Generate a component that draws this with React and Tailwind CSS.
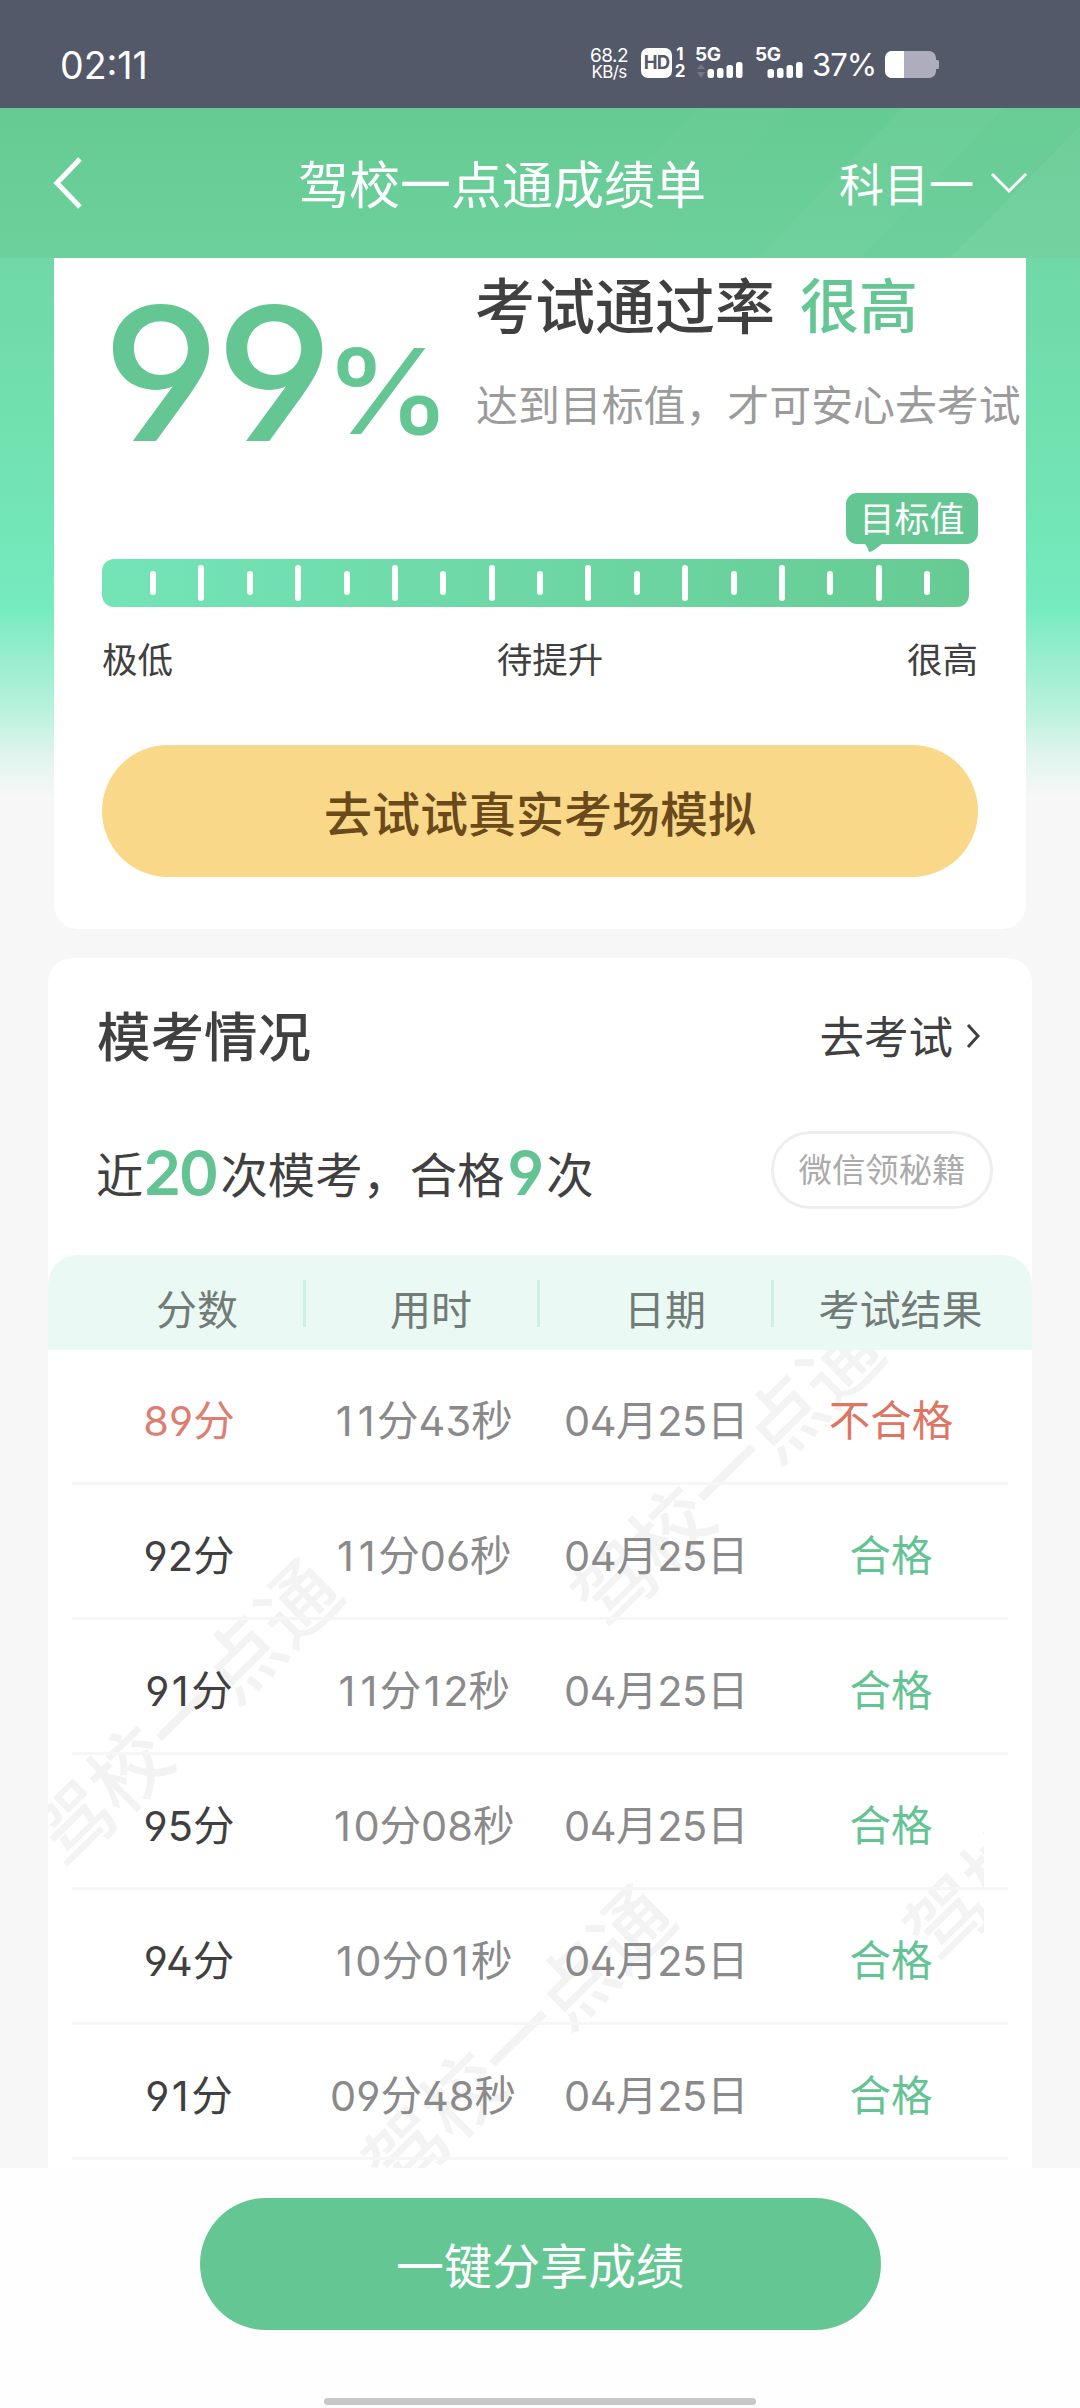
const FONT = "font-['Inter','Noto_Sans_CJK_SC',sans-serif]";

function Signal({ arrows }) {
  return (
    <svg width="50" height="32" viewBox="0 0 50 32" className="block">
      {arrows && (
        <g fill="#73778a">
          <path d="M2 21l4-5 4 5z" />
          <path d="M2 24l4 6 4-6z" />
        </g>
      )}
      <g fill="#fff">
        <rect x="12.500" y="21" width="6.500" height="9" rx="2.500" />
        <rect x="22" y="20" width="6.500" height="10" rx="2.500" />
        <rect x="31.500" y="17" width="6.500" height="13" rx="2.500" />
        <rect x="41" y="14" width="6.500" height="16" rx="2.500" />
      </g>
    </svg>
  );
}

function Network({ arrows }) {
  return (
    <div className="relative w-[60px] h-[32px]">
      <Signal arrows={arrows} />
      <span className="absolute left-0 -top-[3px] text-[19px] leading-[20px] font-bold tracking-[-0.5px]">5G</span>
    </div>
  );
}

function StatusBar() {
  return (
    <div className="h-[108px] bg-[#545969] text-white flex items-start">
      <div className="ml-[60px] mt-[46px] w-[529px] text-[37.500px] leading-[40px] tracking-[0px]">02:11</div>
      <div className="w-[40px] mt-[47px] text-[19px] leading-[17px] whitespace-nowrap tracking-[-0.6px] flex flex-col items-center">
        <span>68.2</span>
        <span className="text-[17px]">KB/s</span>
      </div>
      <div className="ml-[12px] mt-[48px] flex">
        <div className="w-[31px] h-[30px] rounded-[7px] bg-white flex items-center justify-center text-[18.500px] font-bold text-[#545969] tracking-[-0.9px]">
          HD
        </div>
        <div className="ml-[2px] flex flex-col items-center text-[17px] leading-[17px] font-bold w-[12px] -mt-[2px]">
          <span>1</span>
          <span>2</span>
        </div>
      </div>
      <div className="ml-[9px] mt-[48px] flex">
        <Network arrows />
        <Network />
      </div>
      <div className="-ml-[3px] mt-[49px] w-[68px] text-[31px] leading-[32px] tracking-[-1px] whitespace-nowrap">37%</div>
      <svg width="56" height="28" viewBox="0 0 56 28" className="ml-[5px] mt-[51px]">
        <path d="M7 0H44a7 7 0 0 1 7 7V20a7 7 0 0 1-7 7H7a7 7 0 0 1-7-7V7a7 7 0 0 1 7-7z" fill="#adadbd" />
        <path d="M51 9h1.500a1.500 1.500 0 0 1 1.500 1.500v6a1.500 1.500 0 0 1-1.500 1.500H51z" fill="#adadbd" />
        <path d="M7 0H19V27H7a7 7 0 0 1-7-7V7a7 7 0 0 1 7-7z" fill="#fff" />
      </svg>
    </div>
  );
}

function Header() {
  return (
    <div className="relative h-[150px] overflow-hidden bg-linear-to-b from-[#66cb92] to-[#6bd09b] text-white">
      <svg width="1080" height="150" viewBox="0 0 1080 150" className="absolute inset-0">
        <path d="M700 0H790L645 150H550z" fill="#fff" opacity="0.015" />
        <path d="M902 0H1005L860 150H757z" fill="#fff" opacity="0.040" />
        <path d="M1080 0V18L950 150H860L1005 0z" fill="#fff" opacity="0.020" />
        <path d="M1080 18V150H950z" fill="#fff" opacity="0.060" />
      </svg>
      <div className="relative flex h-full">
        <svg width="30" height="52" viewBox="0 0 30 52" className="ml-[52px] mt-[49px]" fill="none" stroke="#fff" strokeWidth="5">
          <path d="M28 2L5 26l23 24" />
        </svg>
        <h1 className="ml-[216px] mt-[48px] w-[541px] text-[51px] leading-[60px]">驾校一点通成绩单</h1>
        <div className="mt-[48px] w-[152px] text-[45px] leading-[60px]">科目一</div>
        <svg width="38" height="24" viewBox="0 0 38 24" className="-ml-[1px] mt-[63px]" fill="none" stroke="#fff" strokeWidth="3">
          <path d="M2 3l17 17L36 3" />
        </svg>
      </div>
    </div>
  );
}

const ticks = Array.from({ length: 17 }, (_, i) => i % 2 === 1);

function Gauge() {
  return (
    <>
      <div className="ml-[792px] w-[132px]">
        <div className="h-[51px] rounded-[11px] bg-[#64c793] text-white text-[35px] leading-[53px] text-center">目标值</div>
        <svg width="20" height="8" viewBox="0 0 20 8" className="ml-[19px] block">
          <path d="M0 0H17C12 3 10 7 4 8 3 5 2 2 0 0z" fill="#64c793" />
        </svg>
      </div>
      <div className="mt-[7px] ml-[48px] w-[867px] h-[48px] rounded-[12px] bg-linear-to-r from-[#74e4b7] to-[#66cb93] flex items-center justify-between pl-[48px] pr-[39px]">
        {ticks.map((tall, i) => (
          <span key={i} className={tall ? "w-[6px] h-[36px] rounded-[3px] bg-white" : "w-[6px] h-[24px] rounded-[3px] bg-white"} />
        ))}
      </div>
      <div className="mx-[48px] mt-[29px] flex justify-between text-[35.500px] leading-[50px] text-[#404040]">
        <span>极低</span>
        <span className="ml-[20px]">待提升</span>
        <span>很高</span>
      </div>
    </>
  );
}

function RateCard() {
  return (
    <div className="mx-[54px] h-[671px] rounded-b-[24px] bg-white overflow-hidden">
      <div className="flex h-[235px]">
        <div className="w-[423px] pl-[48px] pt-[23px] flex items-start text-[#64c793]">
          <span className="origin-left scale-x-[1.07] text-[186px] leading-[186px] font-medium tracking-[-4.5px] [font-feature-settings:'cv03','cv04','ss01']">99</span>
          <span className="origin-left scale-x-[1.09] text-[118px] leading-[118px] font-medium mt-[51px] ml-[10px]">%</span>
        </div>
        <div className="whitespace-nowrap">
          <div className="mt-[13px] -ml-[2px] text-[60px] leading-[72px] font-medium text-[#404040] flex">
            <span>考试通过率</span>
            <span className="ml-[25px] text-[59px] text-[#64c793]">很高</span>
          </div>
          <div className="mt-[37px] -ml-[1px] text-[41.900px] leading-[52px] text-[#9b9b9b]">达到目标值，才可安心去考试</div>
        </div>
      </div>
      <Gauge />
      <button className="mt-[59px] ml-[48px] w-[876px] h-[132px] rounded-full bg-[#f9d989] text-[48px] leading-[60px] font-medium text-[#6a4a1b] pt-[7px] block">
        去试试真实考场模拟
      </button>
    </div>
  );
}

const rows = [
  ["89分", "11分43秒", "04月25日", "不合格"],
  ["92分", "11分06秒", "04月25日", "合格"],
  ["91分", "11分12秒", "04月25日", "合格"],
  ["95分", "10分08秒", "04月25日", "合格"],
  ["94分", "10分01秒", "04月25日", "合格"],
  ["91分", "09分48秒", "04月25日", "合格"],
];

const headings = ["分数", "用时", "日期", "考试结果"];

/* Gives the narrow "1" some room so that the figures keep an even rhythm. */
function Figures({ text }) {
  return text.split(/(1)/).map((part, i) =>
    part === "1" ? (
      <span key={i} className="px-[2.5px]">
        1
      </span>
    ) : (
      part
    )
  );
}

function Watermark({ className }) {
  return (
    <span className={`absolute block w-[404px] h-[84px] leading-[84px] text-center whitespace-nowrap text-[79px] font-medium text-[#f3f3f3] -rotate-[44.500deg] ${className}`}>
      驾校一点通
    </span>
  );
}

function Results() {
  return (
    <div className="relative h-[818px] overflow-hidden">
      <div className="absolute left-0 top-0 w-[936px] h-full overflow-hidden">
        <Watermark className="left-[478px] top-[82px]" />
        <Watermark className="left-[-64px] top-[322px]" />
        <Watermark className="left-[269px] top-[648px]" />
        <Watermark className="left-[810px] top-[416px]" />
      </div>
      <div className="relative mx-[24px]">
        {rows.map(([score, time, date, result], i) => {
          const fail = result === "不合格";
          return (
            <div
              key={i}
              className="h-[135px] pt-[10px] grid grid-cols-4 items-center text-center border-b-[3px] border-[#f6f6f6] text-[41.500px] leading-[60px] text-[#8a8a8a] [font-feature-settings:'cv03','cv04','ss01']"
            >
              <span className={fail ? "text-[#dc7f72]" : "text-[#404040]"}>
                <Figures text={score} />
              </span>
              <span>
                <Figures text={time} />
              </span>
              <span className="tracking-[-0.4px] -ml-[2px]">{date}</span>
              <span className={fail ? "text-[#dc7663]" : "text-[#64c393]"}>{result}</span>
            </div>
          );
        })}
      </div>
    </div>
  );
}

function ExamsCard() {
  return (
    <div className="mx-[48px] mt-[29px] h-[1210px] rounded-t-[24px] bg-white">
      <div className="flex justify-between items-center pt-[50px] pl-[49px] pr-[51px] text-[#404040]">
        <h2 className="text-[53.500px] leading-[60px] font-medium">模考情况</h2>
        <div className="flex items-center text-[44.500px] leading-[60px]">
          去考试
          <svg width="16" height="26" viewBox="0 0 16 26" className="ml-[12px] -mt-[5px]" fill="none" stroke="#404040" strokeWidth="3">
            <path d="M3 2l10 11L3 24" />
          </svg>
        </div>
      </div>
      <div className="flex justify-between mt-[63px] h-[124px] pl-[48px] pr-[39px]">
        <div className="mt-[15px] flex text-[47.300px] leading-[60px] text-[#404040] [font-feature-settings:'cv03','cv04','ss01']">
          <span>近</span>
          <span className="text-[61px] font-semibold tracking-[-2.5px] text-[#64c393] -mt-[3px]">20</span>
          <span className="ml-[4px]">次模考，合格</span>
          <span className="ml-[3px] text-[61px] font-semibold tracking-[-1px] text-[#64c393] -mt-[3px]">9</span>
          <span className="ml-[3px]">次</span>
        </div>
        <div className="w-[222px] h-[78px] rounded-full border-[3px] border-[#eeeeee] text-center text-[33.400px] leading-[72px] text-[#ababab]">
          微信领秘籍
        </div>
      </div>
      <div className="h-[95px] rounded-t-[30px] bg-[#ebf9f5] px-[24px] pt-[25px] grid grid-cols-4 text-center text-[41px] leading-[60px] text-[#717b77]">
        {headings.map((h, i) => (
          <div key={h} className={i < 3 ? "h-[47px] pl-[19px] border-r-[3px] border-[#cfefe4]" : "h-[47px] pl-[19px]"}>
            {h}
          </div>
        ))}
      </div>
      <Results />
    </div>
  );
}

export default function App() {
  return (
    <div className={`w-[1080px] h-[2408px] overflow-hidden bg-[#f7f7f7] flex flex-col ${FONT}`}>
      <StatusBar />
      <Header />
      <div className="h-[1910px] bg-[linear-gradient(to_bottom,#70d8a7_0px,#72e4b3_230px,#76ebc0_350px,#b8f1dc_450px,#e2f5ee_500px,#f7f7f7_540px)]">
        <RateCard />
        <ExamsCard />
      </div>
      <div className="h-[240px] bg-[#fefefe] flex flex-col items-center">
        <button className="mt-[30px] h-[132px] w-[681px] rounded-full bg-[#64c793] text-white text-[48px] leading-[60px] pt-[5px]">
          一键分享成绩
        </button>
        <div className="mt-[68px] h-[7px] w-[432px] rounded-full bg-[#c8c8c8]" />
      </div>
    </div>
  );
}
